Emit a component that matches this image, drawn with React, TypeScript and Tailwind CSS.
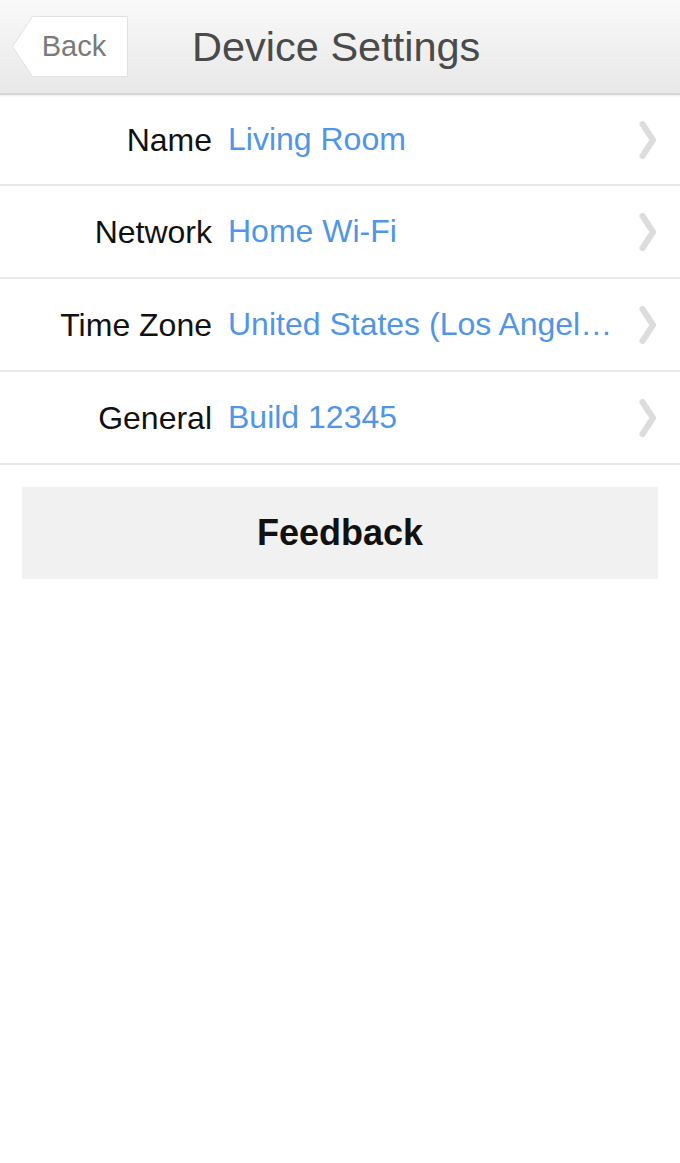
import React from "react";

const rows = [
  { label: "Name", value: "Living Room" },
  { label: "Network", value: "Home Wi-Fi" },
  { label: "Time Zone", value: "United States (Los Angeles)" },
  { label: "General", value: "Build 12345" },
];

function Chevron() {
  return (
    <svg width="20" height="40" viewBox="0 0 20 40" className="shrink-0">
      <path d="M4.5 4 L15 20 L4.5 36" fill="none" stroke="#dcdcdc" strokeWidth="6" strokeLinecap="round" strokeLinejoin="round" />
    </svg>
  );
}

function BackButton() {
  return (
    <button className="relative w-[116px] h-[61px] ml-[12px] flex items-center justify-center pl-[8px]">
      {/* pointed white tag behind the label */}
      <svg className="absolute inset-0" width="116" height="61" viewBox="0 0 116 61">
        <path d="M20.5 0.5 H115.5 V60.5 H20.5 L0.5 30.5 Z" fill="#ffffff" stroke="#e2e2e2" strokeWidth="1" />
      </svg>
      <span className="relative text-[29px] text-[#7a7a7a] leading-none">Back</span>
    </button>
  );
}

export default function App() {
  return (
    <div className="w-[680px] min-h-[1163px] bg-white font-['Liberation_Sans',Arial,sans-serif]">
      <header className="h-[95px] flex items-center bg-gradient-to-b from-[#f9f9f9] to-[#e8e8e8] border-b-2 border-[#d6d6d6] shadow-[0_1px_2px_rgba(0,0,0,0.08)]">
        <BackButton />
        <h1 className="ml-[64px] text-[41.5px] text-[#4a4a4a] leading-none">Device Settings</h1>
      </header>

      <ul>
        {rows.map((r, i) => (
          <li
            key={r.label}
            className={`${i === 0 ? "h-[91px]" : "h-[93px]"} flex items-center border-b-2 border-[#e8e8e8]`}
          >
            <span className="w-[212px] shrink-0 text-right text-[32px] text-[#111] leading-none">{r.label}</span>
            <span className="ml-[16px] flex-1 min-w-0 truncate text-[32px] text-[#5095e8] leading-[1.2] pr-[16px]">
              {r.value}
            </span>
            <div className="mr-[22px]">
              <Chevron />
            </div>
          </li>
        ))}
      </ul>

      <div className="px-[22px] pt-[22px]">
        <button className="w-full h-[92px] bg-[#f1f1f1] text-[36px] font-bold text-[#111]">Feedback</button>
      </div>
    </div>
  );
}
